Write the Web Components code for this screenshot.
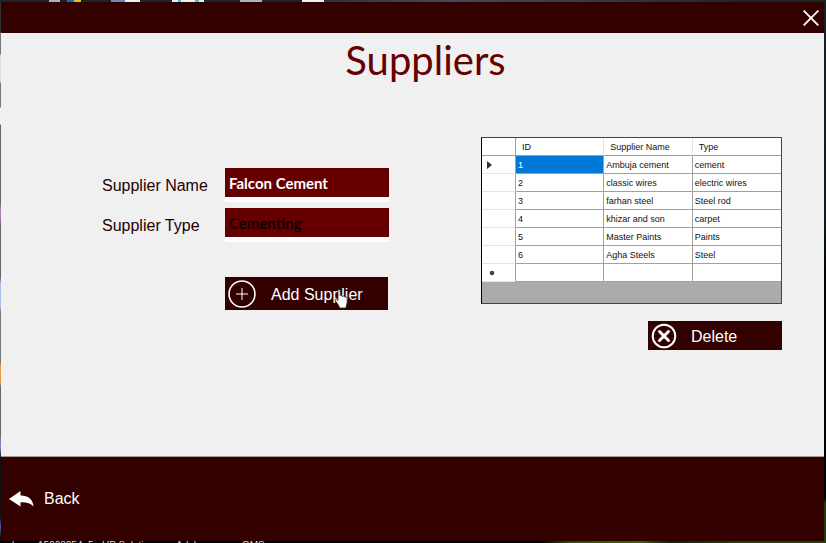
<!DOCTYPE html>
<html lang="en">
<head>
<meta charset="utf-8">
<title>Suppliers</title>
<style>
html, body { margin: 0; height: 100%; }
body { font-family: "Liberation Sans", Arial, sans-serif; font-size: 16px; color: #200; }
</style>
</head>
<body>
<supplier-app></supplier-app>
<script>
class BaseElement extends HTMLElement {
  constructor() {
    super();
    this.attachShadow({ mode: "open" });
  }
  connectedCallback() {
    this.shadowRoot.innerHTML = this.render();
  }
}

/* Desktop visible around the window edges, with the window in the slot */
customElements.define("desktop-frame", class extends BaseElement {
  render() {
    return `
<style>
:host { display: grid; grid-template: 2px 1fr 2px / 1px 1fr 2px; height: 100vh; background: #11191c; overflow: hidden; }
.top { grid-area: 1 / 1 / 2 / 4; background: linear-gradient(90deg, #1c2226 49px, #a9b0b8 49px 60px, #1c2226 60px 67px, #0a6fd0 67px 74px, #f3b52b 74px 81px, #1c2226 81px 111px, #6f84b8 111px 125px, #eee 125px 140px, #1c2226 140px 172px, #eee 172px 178px, #4bb4e4 178px 181px, #eee 181px 195px, #4bb4e4 195px 199px, #eee 199px 204px, #1c2226 204px 240px, #a8b4bc 240px 262px, #1c2226 262px 302px, #eee 302px 324px, #2b323c 324px, #454860 450px, #343848 600px, #1c2226 760px); }
.left { grid-area: 2 / 1; background: linear-gradient(#333 30px, #777 31px 52px, #ddd 53px 80px, #777 81px 105px, #f4f4f4 106px 122px, #666 123px 200px, #b68ac0 210px, #666 225px 275px, #a9bfe6 282px 305px, #777 310px 360px, #f0984a 365px 380px, #666 385px 430px, #8b8bd6 445px, #111 456px 515px, #4a5fa8 525px, #111 535px); }
.right { grid-area: 2 / 3; background: linear-gradient(#162024, #111a1d 40%, #020303 50% 92%, #23380c 93%); }
.bottom { grid-area: 3 / 1 / 4 / 4; background: linear-gradient(90deg, #000 540px, #2f4b0a 570px, #3d5f0c 640px, #10200a 670px, #263f0a 740px); overflow: hidden; }
.icons { display: grid; grid-template-columns: 26px 64px 74px 66px auto; justify-content: start; padding-left: 12px; font: 10px/10px "Liberation Sans", sans-serif; color: #ddd; white-space: nowrap; }
.window { grid-area: 2 / 2; display: grid; min-width: 0; }
</style>
<div class="top"></div><div class="left"></div>
<div class="window"><slot></slot></div>
<div class="right"></div>
<div class="bottom"><div class="icons"><span>l</span><span>15663054_5m</span><span>HP Solution</span><span>Adobe</span><span>GMS</span></div></div>`;
  }
});

customElements.define("title-bar", class extends BaseElement {
  render() {
    return `
<style>
:host { display: flex; justify-content: flex-end; align-items: center; height: 31px; background: #300; }
button { display: grid; place-items: center; width: 27px; height: 31px; padding: 0; border: 0; background: none; color: #fff; }
svg { display: block; }
</style>
<button type="button" aria-label="Close">
<svg width="16" height="16" viewBox="0 0 16 16" fill="none" stroke="currentColor" stroke-width="1.9"><path d="M.7.7l14.6 14.6M15.3.7L.7 15.3"/></svg>
</button>`;
  }
});

customElements.define("text-field", class extends BaseElement {
  render() {
    const tone = this.getAttribute("tone") || "#fff";
    return `
<style>
:host { display: grid; grid-template-columns: 123px 1fr; align-items: center; }
label { padding-top: 2px; }
input { box-sizing: border-box; width: 100%; min-width: 0; height: 34px; margin: 0; padding: 0 4px; border: 0; border-bottom: 5px solid #fff; border-radius: 0; outline: 0; background: #600; color: ${tone}; font: 700 15px/20px Lato, sans-serif; }
</style>
<label for="field">${this.getAttribute("label")}</label>
<input id="field" type="text" value="${this.getAttribute("value")}">`;
  }
});

customElements.define("action-button", class extends BaseElement {
  render() {
    return `
<style>
:host { display: block; }
button { display: flex; align-items: center; gap: var(--gap, 14px); width: 100%; min-height: var(--height, 29px); padding: 0 0 0 3px; border: 0; background: #300; color: #fff; font: 16px/20px "Liberation Sans", Arial, sans-serif; text-align: left; }
span { padding-top: 2px; }
</style>
<button type="button"><slot name="icon"></slot><span><slot></slot></span></button>`;
  }
});

customElements.define("supplier-grid", class extends BaseElement {
  render() {
    const rows = [
      ["1", "Ambuja cement", "cement"],
      ["2", "classic wires", "electric wires"],
      ["3", "farhan steel", "Steel rod"],
      ["4", "khizar and son", "carpet"],
      ["5", "Master Paints", "Paints"],
      ["6", "Agha Steels", "Steel"],
      ["", "", ""]
    ];
    const arrow = '<svg width="5" height="8" viewBox="0 0 5 8"><path d="M0 0l5 4-5 4z" fill="#333"/></svg>';
    const dot = '<svg width="6" height="6" viewBox="0 0 6 6"><circle cx="3" cy="3" r="2.3" fill="#444"/></svg>';
    const body = rows.map((r, i) => `<tr><th scope="row">${i === 0 ? arrow : i === 6 ? dot : ""}</th>${
      r.map((c, j) => `<td${i === 0 && j === 0 ? ' class="selected"' : ""}>${c}</td>`).join("")}</tr>`).join("");
    return `
<style>
:host { display: block; padding-bottom: 21px; border: 1px solid #444; border-left-color: #000; background: #ababab; }
table { width: 100%; table-layout: fixed; border-collapse: separate; border-spacing: 0; background: #fff; color: #111; font: 9px/12px "Liberation Sans", Arial, sans-serif; }
col.marker { width: 34px; }
th, td { box-sizing: border-box; height: 18px; padding: 0 0 0 2px; border: 0 solid #a0a0a0; border-width: 0 1px 1px 0; font-weight: 400; text-align: left; white-space: nowrap; overflow: hidden; }
td:last-child, thead th:last-child { border-right-width: 0; }
thead th { padding-left: 6px; border-right-color: #e4e4e4; }
tbody th { padding-left: 5px; border-bottom-color: #e4e4e4; }
thead th:first-child { border-right-color: #a0a0a0; }
tbody th svg { display: block; }
.selected { background: #0078d7; color: #fff; }
tbody tr:last-child th svg { margin-left: 2px; }
</style>
<table>
<colgroup><col class="marker"><col><col><col></colgroup>
<thead><tr><th></th><th scope="col">ID</th><th scope="col">Supplier Name</th><th scope="col">Type</th></tr></thead>
<tbody>${body}</tbody>
</table>`;
  }
});

customElements.define("back-bar", class extends BaseElement {
  render() {
    return `
<style>
:host { display: flex; align-items: center; height: 85px; box-sizing: border-box; padding: 0 8px; border-top: 1px solid #a89a9a; background: #300; }
button { display: flex; align-items: center; gap: 10px; padding: 0; border: 0; background: none; color: #fff; font: 16px/20px "Liberation Sans", Arial, sans-serif; }
</style>
<button type="button">
<svg width="25" height="16" viewBox="0 0 25 16"><path d="M0 8L11.5 0v4.5C18.5 4.3 24 8 24.5 15.5 21.5 12.2 17.5 11 11.5 11.200v4.300z" fill="#fff"/></svg>
<span>Back</span></button>`;
  }
});

customElements.define("supplier-app", class extends BaseElement {
  render() {
    return `
<style>
:host { display: block; }
.window { display: grid; grid-template-rows: auto 1fr auto; background: #f0f0f0; }
h1 { margin: 0; padding: 4px 0 0 26px; color: #600; font: 400 40px/46px Lato, sans-serif; text-align: center; }
.content { display: grid; grid-template-columns: 287fr 301fr; gap: 92px; align-items: start; padding: 54px 42px 24px 101px; }
form { display: grid; gap: 6px; padding-top: 31px; }
.add { position: relative; margin: 29px 1px 0 123px; --height: 33px; --gap: 15px; }
.list { display: grid; gap: 17px; }
.delete { justify-self: end; width: 134px; }
svg { display: block; flex: none; }
.pointer { position: absolute; left: 109px; top: 12px; }
</style>
<desktop-frame>
<div class="window">
<title-bar></title-bar>
<main>
<h1>Suppliers</h1>
<div class="content">
<form>
<text-field label="Supplier Name" value="Falcon Cement"></text-field>
<text-field label="Supplier Type" value="Cementing" tone="#100"></text-field>
<div class="add">
<action-button>
<svg slot="icon" width="28" height="28" viewBox="0 0 28 28" fill="none" stroke="#fff"><circle cx="14" cy="14" r="13" stroke-width="1.600"/><path d="M14 8v12M8 14h12" stroke-width="1"/></svg>
Add Supplier</action-button>
<svg class="pointer" width="15" height="20" viewBox="0 0 15 20"><path d="M4 1.500C4 .3 6.200.3 6.200 1.500V7C6.500 6.100 8.300 6.400 8.400 7.500 9 6.800 10.600 7 10.800 8.200 11.600 7.600 13.200 8 13.200 9.600V13C13.200 15 12 16 12 19H5.500C5.500 16.800 3.500 15 1.200 11.500.4 10.200 2 9.200 4 11.500z" fill="#fff" stroke="#222" stroke-width=".8"/></svg>
</div>
</form>
<section class="list">
<supplier-grid></supplier-grid>
<action-button class="delete">
<svg slot="icon" width="26" height="26" viewBox="0 0 26 26" fill="none" stroke="#fff" stroke-linecap="round"><circle cx="13" cy="13" r="11.300" stroke-width="2"/><path d="M8.500 8.500l9 9M17.500 8.500l-9 9" stroke-width="3"/></svg>
Delete</action-button>
</section>
</div>
</main>
<back-bar></back-bar>
</div>
</desktop-frame>`;
  }
});
</script>
</body>
</html>
